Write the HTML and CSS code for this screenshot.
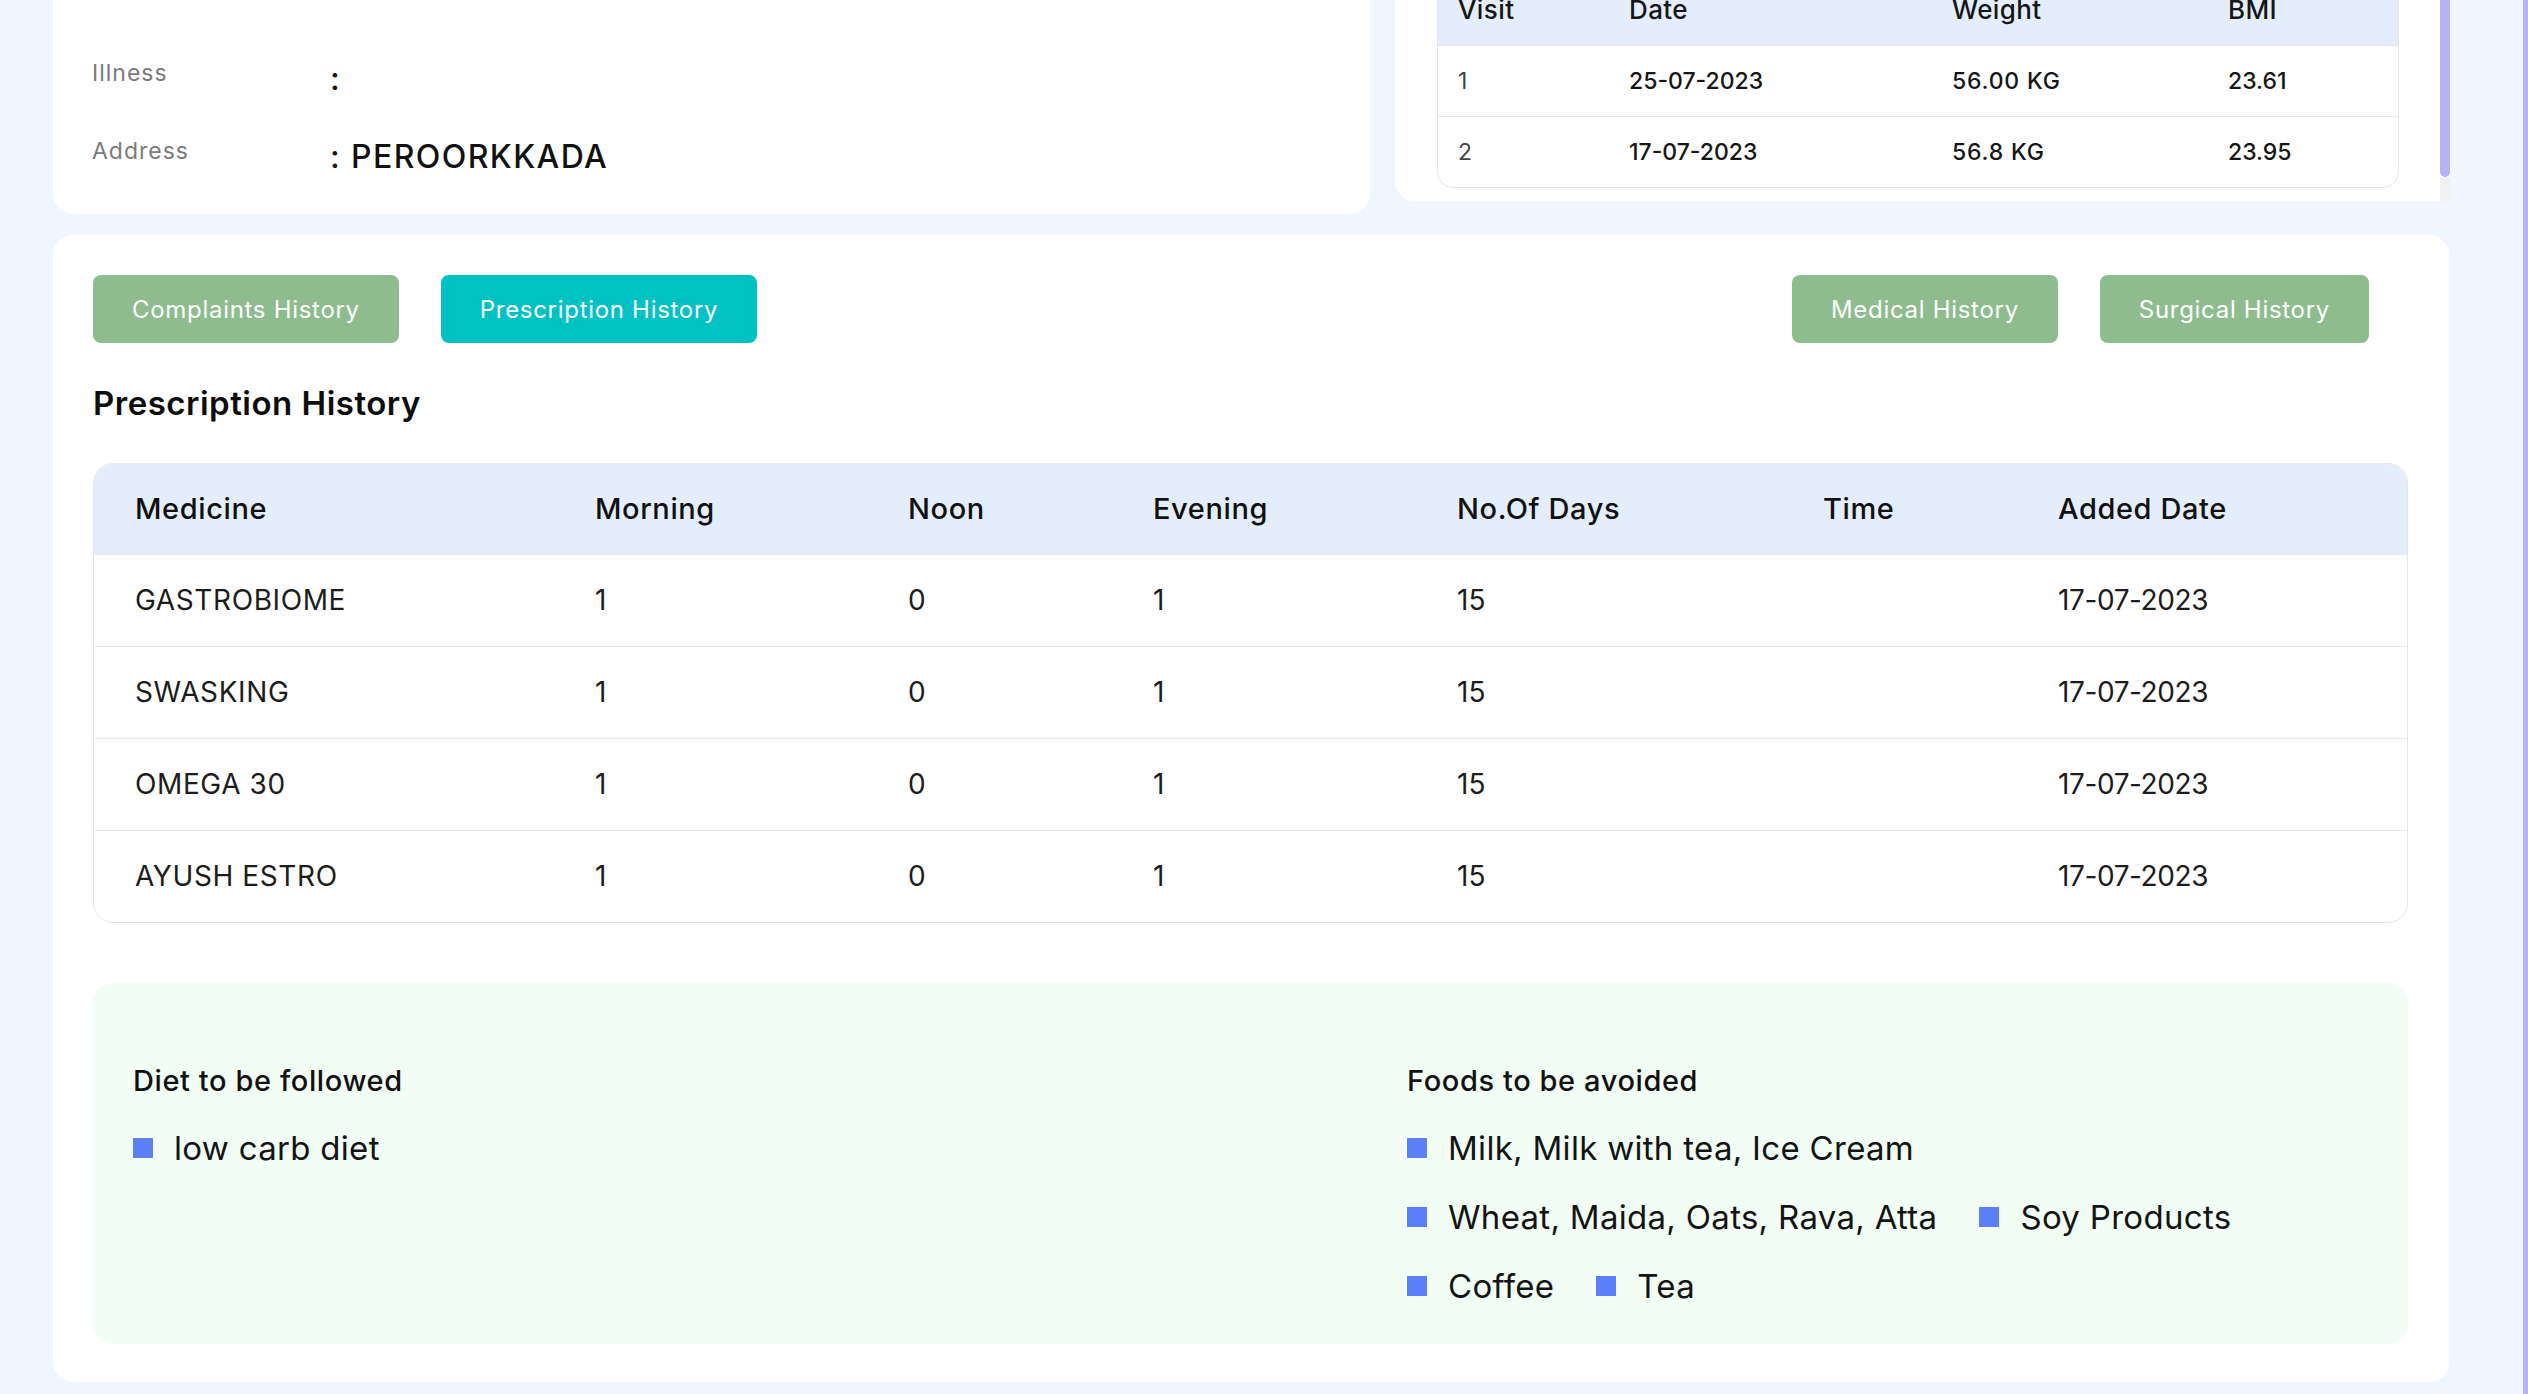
FILE: index.html
```html
<!DOCTYPE html>
<html lang="en">
<head>
<meta charset="utf-8">
<title>Patient – Prescription History</title>
<link rel="stylesheet" href="styles.css">
</head>
<body>
<div class="page">
  <main class="content">
    <section class="top-row">
      <div class="card info-card">
        <div class="info-row">
          <span class="info-label">Illness</span>
          <span class="info-value">:</span>
        </div>
        <div class="info-row">
          <span class="info-label">Address</span>
          <span class="info-value">: PEROORKKADA</span>
        </div>
      </div>
      <div class="card visits-card">
        <div class="visits-body">
          <div class="visits-wrap">
            <table class="visits">
              <colgroup>
                <col class="vc-visit"><col class="vc-date"><col class="vc-weight"><col class="vc-bmi">
              </colgroup>
              <thead>
                <tr><th>Visit</th><th>Date</th><th>Weight</th><th>BMI</th></tr>
              </thead>
              <tbody>
                <tr><td class="muted">1</td><td>25-07-2023</td><td class="txt">56.00 KG</td><td>23.61</td></tr>
                <tr><td class="muted">2</td><td>17-07-2023</td><td class="txt">56.8 KG</td><td>23.95</td></tr>
              </tbody>
            </table>
          </div>
        </div>
        <div class="visits-scrollbar">
          <div class="thumb"></div>
          <div class="track"></div>
        </div>
      </div>
    </section>

    <section class="card history-card">
      <div class="tabs">
        <div class="tab-group">
          <button class="tab">Complaints History</button>
          <button class="tab active">Prescription History</button>
        </div>
        <div class="tab-group">
          <button class="tab">Medical History</button>
          <button class="tab">Surgical History</button>
        </div>
      </div>

      <h2 class="section-title">Prescription History</h2>

      <div class="rx-wrap">
        <table class="rx">
          <colgroup>
            <col class="c-med"><col class="c-morning"><col class="c-noon"><col class="c-evening"><col class="c-days"><col class="c-time"><col class="c-added">
          </colgroup>
          <thead>
            <tr><th>Medicine</th><th>Morning</th><th>Noon</th><th>Evening</th><th>No.Of Days</th><th>Time</th><th>Added Date</th></tr>
          </thead>
          <tbody>
            <tr><td class="name">GASTROBIOME</td><td>1</td><td>0</td><td>1</td><td>15</td><td></td><td class="date">17-07-2023</td></tr>
            <tr><td class="name">SWASKING</td><td>1</td><td>0</td><td>1</td><td>15</td><td></td><td class="date">17-07-2023</td></tr>
            <tr><td class="name">OMEGA 30</td><td>1</td><td>0</td><td>1</td><td>15</td><td></td><td class="date">17-07-2023</td></tr>
            <tr><td class="name">AYUSH ESTRO</td><td>1</td><td>0</td><td>1</td><td>15</td><td></td><td class="date">17-07-2023</td></tr>
          </tbody>
        </table>
      </div>

      <div class="diet-box">
        <div class="diet-col diet-follow">
          <h3 class="diet-title">Diet to be followed</h3>
          <ul class="diet-list">
            <li><span class="sq"></span>low carb diet</li>
          </ul>
        </div>
        <div class="diet-col diet-avoid">
          <h3 class="diet-title">Foods to be avoided</h3>
          <ul class="diet-list">
            <li><span class="sq"></span>Milk, Milk with tea, Ice Cream</li>
            <li><span class="sq"></span>Wheat, Maida, Oats, Rava, Atta</li>
            <li><span class="sq"></span>Soy Products</li>
            <li><span class="sq"></span>Coffee</li>
            <li><span class="sq"></span>Tea</li>
          </ul>
        </div>
      </div>
    </section>
  </main>
  <div class="page-scrollbar"></div>
</div>
</body>
</html>
```
FILE: styles.css
```css
* { box-sizing: border-box; }

html, body {
  margin: 0;
  padding: 0;
  height: 100%;
}

body {
  background: #eff6ff;
  font-family: Inter, "Noto Sans", "Liberation Sans", sans-serif;
  color: #151515;
  overflow: hidden;
}

.page {
  display: flex;
  height: 1394px;
}

.content {
  width: 2523px;
  padding-left: 53px;
  padding-right: 73px;
}

.page-scrollbar {
  width: 5px;
  background: #b6b5f3;
}

.card {
  background: #ffffff;
  border-radius: 20px;
}

/* ---------- top row ---------- */
.top-row {
  display: flex;
  align-items: flex-start;
  gap: 25px;
  margin-top: -40px;
}

.info-card {
  width: 1317px;
  padding: 98px 38px 36px 39px;
  display: flex;
  flex-direction: column;
  gap: 36px;
}

.info-row {
  display: flex;
  align-items: flex-start;
}

.info-label {
  width: 238px;
  font-size: 23px;
  line-height: 30px;
  letter-spacing: 1px;
  color: #7b7b7b;
}

.info-value {
  font-size: 32px;
  line-height: 42px;
  font-weight: 500;
  letter-spacing: 1.4px;
  color: #111;
}

.visits-card {
  flex: 1;
  display: flex;
  border-radius: 20px 0 0 20px;
  overflow: hidden;
}

.visits-body {
  flex: 1;
  padding: 14px 41px 13px 42px;
}

.visits-wrap {
  border: 1px solid #e6e6e6;
  border-radius: 16px;
  overflow: hidden;
}

.visits {
  width: 100%;
  border-collapse: collapse;
  table-layout: fixed;
  font-size: 23px;
  font-weight: 500;
}

.vc-visit { width: 171px; }
.vc-date { width: 323px; }
.vc-weight { width: 276px; }

.visits th,
.visits td {
  text-align: left;
  padding: 0 20px;
  height: 71px;
  color: #161616;
}

.visits thead tr { background: #e3edfc; }
.visits th {
  font-weight: 500;
  height: 70px;
  font-size: 26px;
  letter-spacing: 0.4px;
}
.visits tbody tr { border-top: 1px solid #e8e8e8; }
.visits td.muted { color: #444; font-weight: 400; }
.visits td.txt { letter-spacing: 0.8px; }

.visits-scrollbar {
  width: 10px;
  display: flex;
  flex-direction: column;
}

.visits-scrollbar .thumb {
  flex: 1;
  background: #b4b3f3;
  border-radius: 0 0 5px 5px;
}

.visits-scrollbar .track {
  height: 24px;
  background: #f1f1f1;
}

/* ---------- history card ---------- */
.history-card {
  margin-top: 21px;
  width: 2396px;
  padding: 40px 41px 38px 40px;
}

.tabs {
  display: flex;
  justify-content: space-between;
  padding-right: 39px;
}

.tab-group {
  display: flex;
  gap: 42px;
}

.tab {
  height: 68px;
  padding: 0 39px;
  border: none;
  border-radius: 8px;
  background: #8fbc8f;
  color: #ffffff;
  font-family: inherit;
  font-size: 24px;
  letter-spacing: 0.7px;
  cursor: pointer;
}

.tab.active { background: #00c1c3; }

.section-title {
  margin: 40px 0;
  font-size: 33px;
  line-height: 40px;
  font-weight: 600;
  letter-spacing: 0.5px;
  color: #0d0d0d;
}

.rx-wrap {
  border: 1px solid #e6e6e6;
  border-radius: 20px;
  overflow: hidden;
}

.rx {
  width: 100%;
  border-collapse: collapse;
  table-layout: fixed;
  font-size: 28px;
}

.c-med { width: 460px; }
.c-morning { width: 313px; }
.c-noon { width: 245px; }
.c-evening { width: 304px; }
.c-days { width: 366px; }
.c-time { width: 235px; }

.rx th,
.rx td {
  text-align: left;
  padding: 0 0 0 41px;
  white-space: nowrap;
}

.rx thead tr { background: #e3edfc; }
.rx th {
  height: 90px;
  font-size: 29px;
  font-weight: 500;
  letter-spacing: 0.6px;
  color: #111;
}

.rx tbody tr { border-top: 1px solid #e8e8e8; }
.rx td {
  height: 92px;
  color: #1c1c1c;
}
.rx td.name { letter-spacing: 0.6px; }
.rx td.date { letter-spacing: -0.4px; }

/* ---------- diet ---------- */
.diet-box {
  margin-top: 60px;
  background: #f1fdf5;
  border-radius: 20px;
  padding: 82px 40px 34px;
  display: flex;
}

.diet-follow { width: 1274px; flex: none; }
.diet-avoid { flex: 1; }

.diet-title {
  margin: 0 0 27px;
  font-size: 29px;
  line-height: 32px;
  font-weight: 500;
  letter-spacing: 0.6px;
  color: #111;
}

.diet-list {
  list-style: none;
  margin: 0;
  padding: 0;
  display: flex;
  flex-wrap: wrap;
  column-gap: 42px;
  row-gap: 21px;
}

.diet-list li {
  display: flex;
  align-items: center;
  gap: 21px;
  font-size: 33px;
  line-height: 48px;
  letter-spacing: 0.3px;
  color: #141414;
}

.sq {
  width: 20px;
  height: 20px;
  background: #5b7ff6;
  flex: none;
}
```
